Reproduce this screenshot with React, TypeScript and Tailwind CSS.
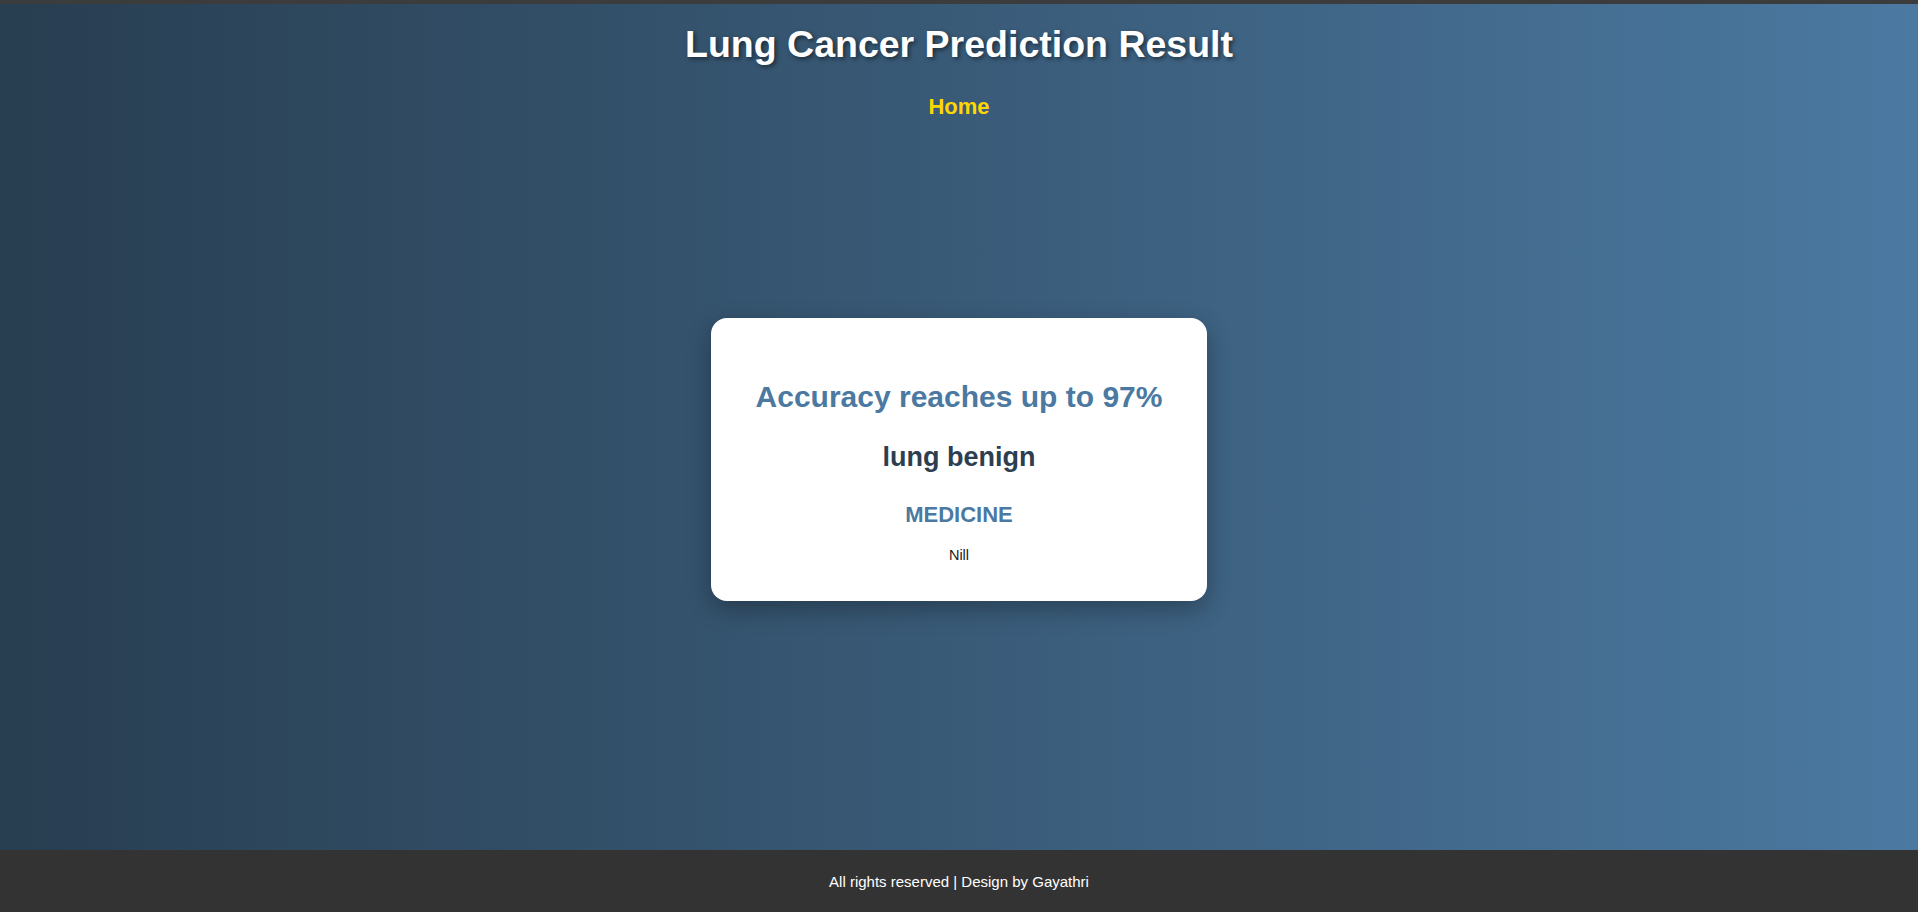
export default function App() {
  return (
    <div className="min-h-screen flex flex-col font-['Liberation_Sans',Arial,sans-serif] bg-linear-to-r from-[#283e51] to-[#4b79a1]">
      <div className="h-[4px] bg-[#3c3c3c]" />
      <header className="pt-[22px] text-center">
        <h1 className="text-[37.5px] leading-none font-bold text-white [text-shadow:2px_2px_4px_rgba(0,0,0,0.5)]">
          Lung Cancer Prediction Result
        </h1>
        <nav className="mt-[32px] text-[22px] leading-none">
          <a href="#" className="inline-block font-bold text-[#ffd700]">
            Home
          </a>
        </nav>
      </header>

      <main className="flex-1 flex justify-center items-start pt-[200px]">
        <div className="w-[496px] bg-white rounded-[16px] shadow-[0_8px_25px_rgba(0,0,0,0.3)] text-center pt-[64px] pb-[39px]">
          <h2 className="text-[30px] leading-none font-bold text-[#4b79a1]">
            Accuracy reaches up to 97%
          </h2>
          <h3 className="mt-[32px] text-[27px] leading-none font-bold text-[#2c3e50]">
            lung benign
          </h3>
          <h4 className="mt-[33px] text-[22px] leading-none font-bold text-[#4b79a1]">
            MEDICINE
          </h4>
          <p className="mt-[22px] text-[14.5px] leading-none text-[#222]">Nill</p>
        </div>
      </main>

      <footer className="h-[62px] pt-[3px] bg-[#333] flex items-center justify-center">
        <p className="text-[15px] text-white">All rights reserved | Design by Gayathri</p>
      </footer>
    </div>
  );
}
